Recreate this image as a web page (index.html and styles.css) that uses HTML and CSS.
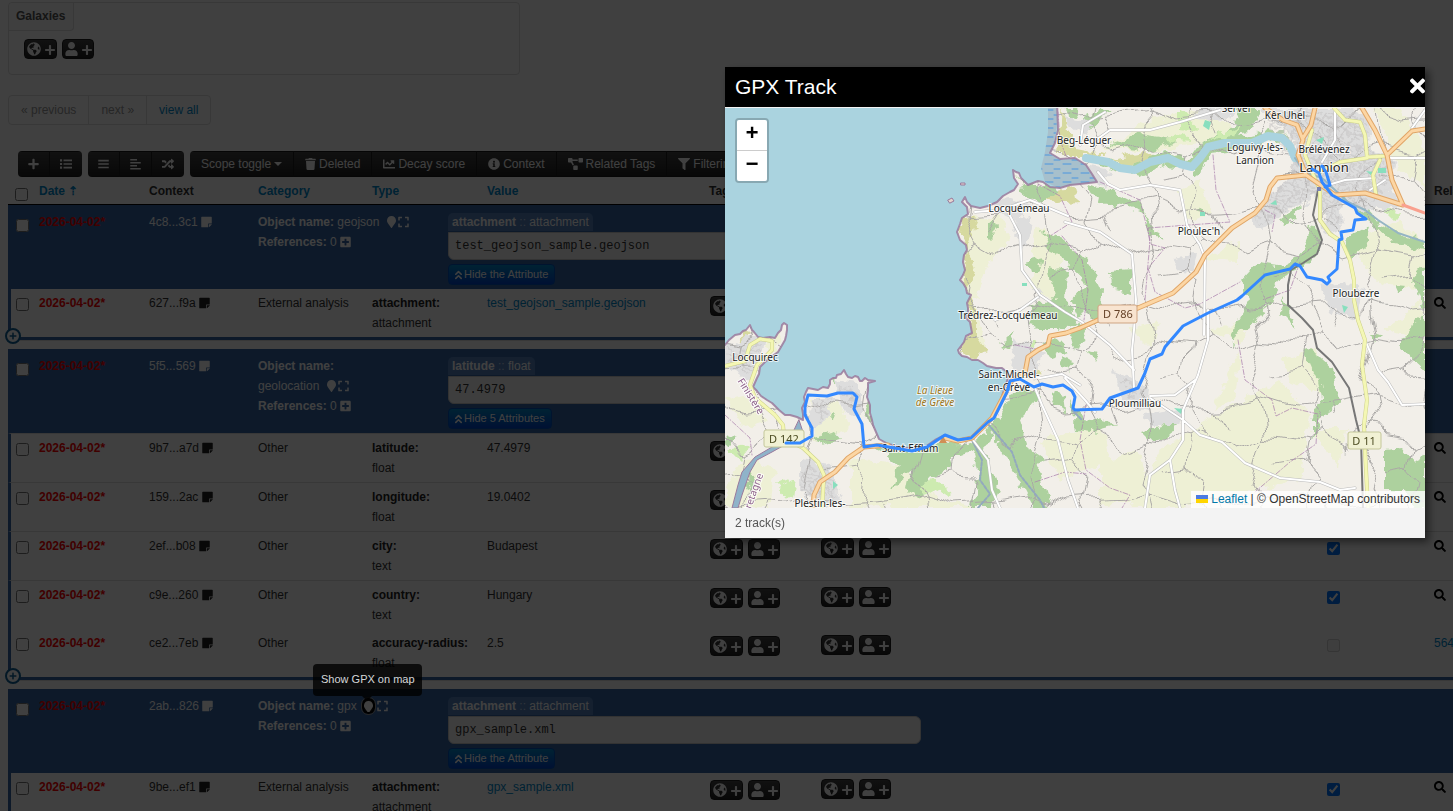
FILE: index.html
```html
<!DOCTYPE html>
<html lang="en">
<head>
<meta charset="utf-8">
<title>Event - GPX Track</title>
<link rel="stylesheet" href="styles.css">
</head>
<body>
<svg class="sprite" aria-hidden="true">
  <symbol id="plus" viewBox="0 0 448 512"><path d="M416 208H272V64c0-17.67-14.33-32-32-32h-32c-17.67 0-32 14.33-32 32v144H32c-17.67 0-32 14.33-32 32v32c0 17.67 14.33 32 32 32h144v144c0 17.67 14.33 32 32 32h32c17.67 0 32-14.33 32-32V304h144c17.67 0 32-14.33 32-32v-32c0-17.67-14.33-32-32-32z"/></symbol>
  <symbol id="user" viewBox="0 0 448 512"><path d="M224 256c70.7 0 128-57.3 128-128S294.7 0 224 0 96 57.3 96 128s57.3 128 128 128zm89.6 32h-16.7c-22.2 10.2-46.9 16-72.9 16s-50.6-5.8-72.9-16h-16.7C60.2 288 0 348.2 0 422.4V464c0 26.5 21.5 48 48 48h352c26.5 0 48-21.5 48-48v-41.6c0-74.2-60.2-134.4-134.4-134.4z"/></symbol>
  <symbol id="globe" viewBox="0 0 496 512"><path d="M248 8C111.03 8 0 119.03 0 256s111.03 248 248 248 248-111.03 248-248S384.97 8 248 8zm82.29 357.6c-3.9 3.88-7.99 7.95-11.31 11.28-2.99 3-5.1 6.7-6.17 10.71-1.51 5.66-2.73 11.38-4.77 16.87l-17.39 46.85c-13.76 3-28 4.69-42.65 4.69v-27.38c1.69-12.62-7.64-36.26-22.63-51.25-6-6-9.37-14.14-9.37-22.63v-32.01c0-11.64-6.27-22.34-16.46-27.97-14.37-7.95-34.81-19.06-48.81-26.11-11.48-5.78-22.1-13.14-31.65-21.75l-.8-.72a114.792 114.792 0 0 1-18.06-20.74c-9.38-13.77-24.66-36.42-34.59-51.14 20.47-45.5 57.36-82.04 103.2-101.89l24.01 12.01C203.48 89.74 216 82.01 216 70.11v-11.3c7.99-1.29 16.12-2.11 24.39-2.42l28.3 28.3c6.25 6.25 6.25 16.38 0 22.63L264 112l-10.34 10.34c-3.12 3.12-3.12 8.19 0 11.31l4.69 4.69c3.12 3.12 3.12 8.19 0 11.31l-8 8a8.008 8.008 0 0 1-5.66 2.34h-8.99c-2.08 0-4.08.81-5.58 2.27l-9.92 9.65a8.008 8.008 0 0 0-1.58 9.31l15.59 31.19c2.66 5.32-1.21 11.58-7.15 11.58h-5.64c-1.93 0-3.79-.7-5.24-1.96l-9.28-8.06a16.017 16.017 0 0 0-15.55-3.1l-31.17 10.39a11.95 11.95 0 0 0-8.17 11.34c0 4.53 2.56 8.66 6.61 10.69l11.08 5.54c9.41 4.71 19.79 7.16 30.31 7.16s22.59 27.29 32 32h66.75c8.49 0 16.62 3.37 22.63 9.37l13.69 13.69a30.503 30.503 0 0 1 8.93 21.57 46.536 46.536 0 0 1-13.72 32.98zM417 274.25c-5.79-1.45-10.84-5-14.15-9.97l-17.98-26.97a23.97 23.97 0 0 1 0-26.62l19.59-29.38c2.32-3.47 5.5-6.29 9.24-8.15l12.98-6.49C440.2 193.59 448 223.87 448 256c0 8.67-.74 17.16-1.82 25.54L417 274.25z"/></symbol>
  <symbol id="search" viewBox="0 0 512 512"><path d="M505 442.7L405.3 343c-4.5-4.5-10.6-7-17-7H372c27.6-35.3 44-79.7 44-128C416 93.1 322.9 0 208 0S0 93.1 0 208s93.1 208 208 208c48.3 0 92.7-16.4 128-44v16.3c0 6.4 2.5 12.5 7 17l99.7 99.7c9.4 9.4 24.6 9.4 33.9 0l28.3-28.3c9.4-9.4 9.4-24.6.1-34zM208 336c-70.7 0-128-57.2-128-128 0-70.7 57.2-128 128-128 70.7 0 128 57.2 128 128 0 70.7-57.2 128-128 128z"/></symbol>
  <symbol id="trash" viewBox="0 0 448 512"><path d="M432 32H312l-9.4-18.7A24 24 0 0 0 281.1 0H166.8a23.72 23.72 0 0 0-21.4 13.3L136 32H16A16 16 0 0 0 0 48v32a16 16 0 0 0 16 16h416a16 16 0 0 0 16-16V48a16 16 0 0 0-16-16zM53.2 467a48 48 0 0 0 47.9 45h245.8a48 48 0 0 0 47.9-45L416 128H32z"/></symbol>
  <symbol id="chart" viewBox="0 0 512 512"><path d="M496 384H64V80c0-8.84-7.16-16-16-16H16C7.16 64 0 71.16 0 80v336c0 17.67 14.33 32 32 32h464c8.84 0 16-7.16 16-16v-32c0-8.84-7.16-16-16-16zM464 96H345.94c-21.38 0-32.09 25.85-16.97 40.97l32.4 32.4L288 242.75l-73.37-73.37c-12.5-12.5-32.76-12.5-45.25 0l-68.69 68.69c-6.25 6.25-6.25 16.38 0 22.63l22.62 22.62c6.25 6.25 16.38 6.25 22.63 0L192 237.25l73.37 73.37c12.5 12.5 32.76 12.5 45.25 0l96-96 32.4 32.4c15.12 15.12 40.97 4.41 40.97-16.97V112c.01-8.84-7.15-16-15.99-16z"/></symbol>
  <symbol id="info" viewBox="0 0 512 512"><path d="M256 8C119.043 8 8 119.083 8 256c0 136.997 111.043 248 248 248s248-111.003 248-248C504 119.083 392.957 8 256 8zm0 110c23.196 0 42 18.804 42 42s-18.804 42-42 42-42-18.804-42-42 18.804-42 42-42zm56 254c0 6.627-5.373 12-12 12h-88c-6.627 0-12-5.373-12-12v-24c0-6.627 5.373-12 12-12h12v-64h-12c-6.627 0-12-5.373-12-12v-24c0-6.627 5.373-12 12-12h64c6.627 0 12 5.373 12 12v100h12c6.627 0 12 5.373 12 12v24z"/></symbol>
  <symbol id="filter" viewBox="0 0 512 512"><path d="M487.976 0H24.028C2.71 0-8.047 25.866 7.058 40.971L192 225.941V432c0 7.831 3.821 15.17 10.237 19.662l80 55.98C298.02 518.69 320 507.493 320 487.98V225.941l184.947-184.97C520.021 25.896 509.338 0 487.976 0z"/></symbol>
  <symbol id="diagram" viewBox="0 0 640 512"><path d="M384 320H256c-17.67 0-32 14.33-32 32v128c0 17.67 14.33 32 32 32h128c17.67 0 32-14.33 32-32V352c0-17.67-14.33-32-32-32zM192 32c0-17.67-14.33-32-32-32H32C14.33 0 0 14.33 0 32v128c0 17.67 14.33 32 32 32h95.72l73.16 128.04C211.98 300.98 232.4 288 256 288h.28L192 175.51V128h224V64H192V32zM608 0H480c-17.67 0-32 14.33-32 32v128c0 17.67 14.33 32 32 32h128c17.67 0 32-14.33 32-32V32c0-17.67-14.33-32-32-32z"/></symbol>
  <symbol id="note" viewBox="0 0 448 512"><path d="M312 320h136V56c0-13.3-10.7-24-24-24H24C10.7 32 0 42.7 0 56v400c0 13.3 10.7 24 24 24h264V344c0-13.2 10.8-24 24-24zm129 55l-98 98c-4.5 4.5-10.6 7-17 7h-6V352h128v6.1c0 6.3-2.5 12.4-7 16.9z"/></symbol>
  <symbol id="plus-square" viewBox="0 0 448 512"><path d="M400 32H48C21.5 32 0 53.5 0 80v352c0 26.5 21.5 48 48 48h352c26.5 0 48-21.5 48-48V80c0-26.5-21.5-48-48-48zm-32 252c0 6.6-5.4 12-12 12h-92v92c0 6.6-5.4 12-12 12h-56c-6.6 0-12-5.4-12-12v-92H92c-6.6 0-12-5.4-12-12v-56c0-6.6 5.4-12 12-12h92v-92c0-6.6 5.4-12 12-12h56c6.6 0 12 5.4 12 12v92h92c6.6 0 12 5.4 12 12v56z"/></symbol>
  <symbol id="expand" viewBox="0 0 448 512"><path d="M0 180V56c0-13.3 10.7-24 24-24h124c6.6 0 12 5.4 12 12v40c0 6.6-5.4 12-12 12H64v84c0 6.6-5.4 12-12 12H12c-6.6 0-12-5.4-12-12zM288 44v40c0 6.6 5.4 12 12 12h84v84c0 6.6 5.4 12 12 12h40c6.6 0 12-5.4 12-12V56c0-13.3-10.7-24-24-24H300c-6.6 0-12 5.4-12 12zm148 276h-40c-6.6 0-12 5.4-12 12v84h-84c-6.6 0-12 5.4-12 12v40c0 6.6 5.4 12 12 12h124c13.3 0 24-10.7 24-24V332c0-6.6-5.4-12-12-12zM160 468v-40c0-6.6-5.4-12-12-12H64v-84c0-6.6-5.4-12-12-12H12c-6.6 0-12 5.4-12 12v124c0 13.3 10.7 24 24 24h124c6.6 0 12-5.4 12-12z"/></symbol>
  <symbol id="marker" viewBox="0 0 384 512"><path d="M172.268 501.67C26.97 291.031 0 269.413 0 192 0 85.961 85.961 0 192 0s192 85.961 192 192c0 77.413-26.97 99.031-172.268 309.67-9.535 13.774-29.93 13.773-39.464 0z"/></symbol>
  <symbol id="times" viewBox="0 0 352 512"><path d="M242.72 256l100.07-100.07c12.28-12.28 12.28-32.19 0-44.48l-22.24-22.24c-12.28-12.28-32.19-12.28-44.48 0L176 189.28 75.93 89.21c-12.28-12.28-32.19-12.28-44.48 0L9.21 111.45c-12.28 12.28-12.28 32.19 0 44.48L109.28 256 9.21 356.07c-12.28 12.28-12.28 32.19 0 44.48l22.24 22.24c12.28 12.28 32.2 12.28 44.48 0L176 322.72l100.07 100.07c12.28 12.28 32.2 12.28 44.48 0l22.24-22.24c12.28-12.28 12.28-32.19 0-44.48L242.72 256z"/></symbol>
  <symbol id="random" viewBox="0 0 512 512"><path d="M504.971 359.029c9.373 9.373 9.373 24.569 0 33.941l-80 79.984c-15.01 15.01-40.971 4.49-40.971-16.971V416h-58.785a12.004 12.004 0 0 1-8.773-3.812l-70.556-75.596 53.333-57.143L352 336h32v-39.981c0-21.438 25.943-31.998 40.971-16.971l80 79.981zM12 176h84l52.781 56.551 53.333-57.143-70.556-75.596A11.999 11.999 0 0 0 122.785 96H12c-6.627 0-12 5.373-12 12v56c0 6.627 5.373 12 12 12zm372 0v39.984c0 21.46 25.961 31.98 40.971 16.971l80-79.984c9.373-9.373 9.373-24.569 0-33.941l-80-79.981C409.943 24.021 384 34.582 384 56.019V96h-58.785a12.004 12.004 0 0 0-8.773 3.812L96 336H12c-6.627 0-12 5.373-12 12v56c0 6.627 5.373 12 12 12h110.785c3.326 0 6.503-1.381 8.773-3.812L352 176h32z"/></symbol>
  <symbol id="list" viewBox="0 0 512 512"><path d="M0 56h90v90H0zM0 211h90v90H0zM0 366h90v90H0zM150 66h362v68H150zM150 221h362v68H150zM150 376h362v68H150z"/></symbol>
  <symbol id="justify" viewBox="0 0 448 512"><path d="M0 76h448v68H0zM0 222h448v68H0zM0 368h448v68H0z"/></symbol>
  <symbol id="align-left" viewBox="0 0 448 512"><path d="M0 40h288v64H0zM0 168h448v64H0zM0 296h288v64H0zM0 424h448v64H0z"/></symbol>
  <symbol id="double-up" viewBox="0 0 320 512"><path d="M34 246 160 120l126 126M34 438l126-126 126 126" fill="none" stroke="currentColor" stroke-width="72" stroke-linejoin="round" stroke-linecap="round"/></symbol>
</svg>

<main class="page">
  <section class="galaxies">
    <h2 class="galaxies-title">Galaxies</h2>
    <div class="adders">
      <button class="adder" aria-label="Add global galaxy"><svg class="i14"><use href="#globe"/></svg><svg class="i12"><use href="#plus"/></svg></button>
      <button class="adder" aria-label="Add local galaxy"><svg class="i14 n13"><use href="#user"/></svg><svg class="i12"><use href="#plus"/></svg></button>
    </div>
  </section>

  <nav class="pagination">
    <a class="muted" href="#">« previous</a>
    <a class="muted" href="#">next »</a>
    <a href="#">view all</a>
  </nav>

  <div class="toolbar">
    <div class="group">
      <button class="tool" aria-label="Add attribute"><svg class="ico"><use href="#plus"/></svg></button>
      <button class="tool" aria-label="List"><svg class="ico w12"><use href="#list"/></svg></button>
    </div>
    <div class="group">
      <button class="tool" aria-label="Flat"><svg class="ico"><use href="#justify"/></svg></button>
      <button class="tool" aria-label="Tree"><svg class="ico"><use href="#align-left"/></svg></button>
      <button class="tool" aria-label="Shuffle"><svg class="ico w12"><use href="#random"/></svg></button>
    </div>
    <div class="group wide">
      <button class="tool">Scope toggle<span class="caret"></span></button>
      <button class="tool"><svg class="ico"><use href="#trash"/></svg>Deleted</button>
      <button class="tool"><svg class="ico w12"><use href="#chart"/></svg>Decay score</button>
      <button class="tool"><svg class="ico w12"><use href="#info"/></svg>Context</button>
      <button class="tool"><svg class="ico w15"><use href="#diagram"/></svg>Related Tags</button>
      <button class="tool"><svg class="ico w12"><use href="#filter"/></svg>Filtering tool</button>
    </div>
  </div>

  <table class="attributes">
    <colgroup><col class="c-check"><col class="c-date"><col class="c-context"><col class="c-category"><col class="c-type"><col class="c-value"><col class="c-tags"><col class="c-tags"><col><col class="c-corr"><col class="c-related"></colgroup>
    <thead>
      <tr>
        <th><input type="checkbox" aria-label="Select all"></th>
        <th><a href="#">Date ⇡</a></th><th>Context</th><th><a href="#">Category</a></th><th><a href="#">Type</a></th><th><a href="#">Value</a></th><th>Tags</th><th>Galaxies</th><th>Comment</th><th></th><th>Related Events</th>
      </tr>
    </thead>
    <tbody>
      <tr class="object">
        <td><input type="checkbox" aria-label="Select object 4c8"></td><td class="date">2026-04-02*</td>
        <td>4c8...3c1 <svg class="ico"><use href="#note"/></svg></td>
        <td colspan="8"><div class="object-body">
          <div class="object-name"><b>Object name:</b> geojson <a href="#" class="act first" aria-label="Show on map"><svg class="ico w9"><use href="#marker"/></svg></a><a href="#" class="act" aria-label="Expand"><svg class="ico"><use href="#expand"/></svg></a><br><b>References:</b> 0 <svg class="ico"><use href="#plus-square"/></svg></div>
          <div class="preview"><div class="preview-tab"><b>attachment</b> <i>::</i> attachment</div><pre class="preview-value">test_geojson_sample.geojson</pre><button class="toggle"><svg class="i11"><use href="#double-up"/></svg>Hide the Attribute</button></div>
        </div></td>
      </tr>
      <tr class="last">
        <td><input type="checkbox" aria-label="Select 627"></td><td class="date">2026-04-02*</td>
        <td>627...f9a <svg class="ico dark"><use href="#note"/></svg></td>
        <td>External analysis</td><td><b>attachment:</b><br>attachment</td><td><a href="#">test_geojson_sample.geojson</a></td>
        <td><div class="adders tags"><button class="adder" aria-label="Add tag"><svg class="i14"><use href="#globe"/></svg><svg class="i12"><use href="#plus"/></svg></button><button class="adder" aria-label="Add local tag"><svg class="i14 n13"><use href="#user"/></svg><svg class="i12"><use href="#plus"/></svg></button></div></td>
        <td></td><td></td><td></td><td><a class="look" href="#" aria-label="Search"><svg class="ico w12"><use href="#search"/></svg></a></td>
      </tr>
      <tr class="gap"><td colspan="11"><button class="add-row" aria-label="Add attribute to object"><svg class="i8"><use href="#plus"/></svg></button></td></tr>

      <tr class="object">
        <td><input type="checkbox" aria-label="Select object 5f5"></td><td class="date">2026-04-02*</td>
        <td>5f5...569 <svg class="ico"><use href="#note"/></svg></td>
        <td colspan="8"><div class="object-body">
          <div class="object-name"><b>Object name:</b><br>geolocation <a href="#" class="act first" aria-label="Show on map"><svg class="ico w9"><use href="#marker"/></svg></a><a href="#" class="act" aria-label="Expand"><svg class="ico"><use href="#expand"/></svg></a><br><b>References:</b> 0 <svg class="ico"><use href="#plus-square"/></svg></div>
          <div class="preview"><div class="preview-tab"><b>latitude</b> <i>::</i> float</div><pre class="preview-value">47.4979</pre><button class="toggle"><svg class="i11"><use href="#double-up"/></svg>Hide 5 Attributes</button></div>
        </div></td>
      </tr>
      <tr>
        <td><input type="checkbox" aria-label="Select 9b7"></td><td class="date">2026-04-02*</td>
        <td>9b7...a7d <svg class="ico dark"><use href="#note"/></svg></td>
        <td>Other</td><td><b>latitude:</b><br>float</td><td>47.4979</td>
        <td><div class="adders tags"><button class="adder" aria-label="Add tag"><svg class="i14"><use href="#globe"/></svg><svg class="i12"><use href="#plus"/></svg></button></div></td>
        <td></td><td></td><td></td><td><a class="look" href="#" aria-label="Search"><svg class="ico w12"><use href="#search"/></svg></a></td>
      </tr>
      <tr>
        <td><input type="checkbox" aria-label="Select 159"></td><td class="date">2026-04-02*</td>
        <td>159...2ac <svg class="ico dark"><use href="#note"/></svg></td>
        <td>Other</td><td><b>longitude:</b><br>float</td><td>19.0402</td>
        <td><div class="adders tags"><button class="adder" aria-label="Add tag"><svg class="i14"><use href="#globe"/></svg><svg class="i12"><use href="#plus"/></svg></button></div></td>
        <td></td><td></td><td></td><td><a class="look" href="#" aria-label="Search"><svg class="ico w12"><use href="#search"/></svg></a></td>
      </tr>
      <tr>
        <td><input type="checkbox" aria-label="Select 2ef"></td><td class="date">2026-04-02*</td>
        <td>2ef...b08 <svg class="ico dark"><use href="#note"/></svg></td>
        <td>Other</td><td><b>city:</b><br>text</td><td>Budapest</td>
        <td><div class="adders tags"><button class="adder" aria-label="Add tag"><svg class="i14"><use href="#globe"/></svg><svg class="i12"><use href="#plus"/></svg></button><button class="adder" aria-label="Add local tag"><svg class="i14 n13"><use href="#user"/></svg><svg class="i12"><use href="#plus"/></svg></button></div></td>
        <td><div class="adders"><button class="adder" aria-label="Add galaxy"><svg class="i14"><use href="#globe"/></svg><svg class="i12"><use href="#plus"/></svg></button><button class="adder" aria-label="Add local galaxy"><svg class="i14 n13"><use href="#user"/></svg><svg class="i12"><use href="#plus"/></svg></button></div></td>
        <td></td><td class="corr"><input type="checkbox" checked aria-label="Correlate"></td><td><a class="look" href="#" aria-label="Search"><svg class="ico w12"><use href="#search"/></svg></a></td>
      </tr>
      <tr>
        <td><input type="checkbox" aria-label="Select c9e"></td><td class="date">2026-04-02*</td>
        <td>c9e...260 <svg class="ico dark"><use href="#note"/></svg></td>
        <td>Other</td><td><b>country:</b><br>text</td><td>Hungary</td>
        <td><div class="adders tags"><button class="adder" aria-label="Add tag"><svg class="i14"><use href="#globe"/></svg><svg class="i12"><use href="#plus"/></svg></button><button class="adder" aria-label="Add local tag"><svg class="i14 n13"><use href="#user"/></svg><svg class="i12"><use href="#plus"/></svg></button></div></td>
        <td><div class="adders"><button class="adder" aria-label="Add galaxy"><svg class="i14"><use href="#globe"/></svg><svg class="i12"><use href="#plus"/></svg></button><button class="adder" aria-label="Add local galaxy"><svg class="i14 n13"><use href="#user"/></svg><svg class="i12"><use href="#plus"/></svg></button></div></td>
        <td></td><td class="corr"><input type="checkbox" checked aria-label="Correlate"></td><td><a class="look" href="#" aria-label="Search"><svg class="ico w12"><use href="#search"/></svg></a></td>
      </tr>
      <tr class="last">
        <td><input type="checkbox" aria-label="Select ce2"></td><td class="date">2026-04-02*</td>
        <td>ce2...7eb <svg class="ico dark"><use href="#note"/></svg></td>
        <td>Other</td><td><b>accuracy-radius:</b><br>float</td><td>2.5</td>
        <td><div class="adders tags"><button class="adder" aria-label="Add tag"><svg class="i14"><use href="#globe"/></svg><svg class="i12"><use href="#plus"/></svg></button><button class="adder" aria-label="Add local tag"><svg class="i14 n13"><use href="#user"/></svg><svg class="i12"><use href="#plus"/></svg></button></div></td>
        <td><div class="adders"><button class="adder" aria-label="Add galaxy"><svg class="i14"><use href="#globe"/></svg><svg class="i12"><use href="#plus"/></svg></button><button class="adder" aria-label="Add local galaxy"><svg class="i14 n13"><use href="#user"/></svg><svg class="i12"><use href="#plus"/></svg></button></div></td>
        <td></td><td class="corr"><input type="checkbox" disabled aria-label="Correlate"></td><td><a href="#">564</a></td>
      </tr>
      <tr class="gap"><td colspan="11"><button class="add-row" aria-label="Add attribute to object"><svg class="i8"><use href="#plus"/></svg></button></td></tr>

      <tr class="object">
        <td><input type="checkbox" aria-label="Select object 2ab"></td><td class="date">2026-04-02*</td>
        <td>2ab...826 <svg class="ico"><use href="#note"/></svg></td>
        <td colspan="8"><div class="object-body">
          <div class="object-name"><b>Object name:</b> gpx <a href="#" class="act first focused" aria-label="Show GPX on map"><svg class="ico w9"><use href="#marker"/></svg></a><a href="#" class="act" aria-label="Expand"><svg class="ico"><use href="#expand"/></svg></a><br><b>References:</b> 0 <svg class="ico"><use href="#plus-square"/></svg></div>
          <div class="preview"><div class="preview-tab"><b>attachment</b> <i>::</i> attachment</div><pre class="preview-value">gpx_sample.xml</pre><button class="toggle"><svg class="i11"><use href="#double-up"/></svg>Hide the Attribute</button></div>
        </div></td>
      </tr>
      <tr class="last">
        <td><input type="checkbox" aria-label="Select 9be"></td><td class="date">2026-04-02*</td>
        <td>9be...ef1 <svg class="ico dark"><use href="#note"/></svg></td>
        <td>External analysis</td><td><b>attachment:</b><br>attachment</td><td><a href="#">gpx_sample.xml</a></td>
        <td><div class="adders tags"><button class="adder" aria-label="Add tag"><svg class="i14"><use href="#globe"/></svg><svg class="i12"><use href="#plus"/></svg></button><button class="adder" aria-label="Add local tag"><svg class="i14 n13"><use href="#user"/></svg><svg class="i12"><use href="#plus"/></svg></button></div></td>
        <td><div class="adders"><button class="adder" aria-label="Add galaxy"><svg class="i14"><use href="#globe"/></svg><svg class="i12"><use href="#plus"/></svg></button><button class="adder" aria-label="Add local galaxy"><svg class="i14 n13"><use href="#user"/></svg><svg class="i12"><use href="#plus"/></svg></button></div></td>
        <td></td><td class="corr"><input type="checkbox" checked aria-label="Correlate"></td><td><a class="look" href="#" aria-label="Search"><svg class="ico w12"><use href="#search"/></svg></a></td>
      </tr>
    </tbody>
  </table>
</main>

<div class="overlay"></div>
<div class="tooltip" role="tooltip">Show GPX on map</div>

<section class="modal" role="dialog" aria-labelledby="modal-title">
  <header class="modal-head"><h1 id="modal-title">GPX Track</h1><button class="close" aria-label="Close"><svg><use href="#times"/></svg></button></header>
  <div class="map">
    <svg class="map-canvas" viewBox="725 108 700 400" preserveAspectRatio="xMidYMid slice">
      <defs>
        <path id="land" d="M715 350 725 345 729 340 735 335 740 334 743 331 746 330 750 325 752 330 754 332 758 337 763 338 770 337 775 338 778 333 781 330 782 325 784 323 787 325 787 330 786 336 785 340 781 347 778 352 771 357 765 362 760 367 759 374 757 378 753 387 757 391 761 396 767 400 772 403 779 410 785 415 790 415 797 417 803 420 803 414 802 408 805 402 804 397 806 392 808 388 813 389 818 390 823 387 828 388 830 384 830 380 833 378 836 378 837 375 841 374 844 370 846 374 848 377 852 378 855 376 858 377 860 381 862 381 865 378 868 380 875 381 868 383 868 390 867 397 870 405 870 413 872 420 873 425 876 432 879 439 888 444 905 448 925 447 935 440 945 435 957 440 972 437 992 417 1000 402 1008 378 1007 372 1002 368 996 368 987 366 983 363 978 360 972 360 967 357 962 356 959 353 958 350 961 346 964 342 966 336 972 333 970 322 966 318 968 313 968 308 967 303 971 295 967 293 966 288 963 283 960 280 963 275 965 270 963 262 964 255 967 250 966 245 960 240 957 232 960 224 962 218 968 214 967 207 962 202 965 197 967 202 971 206 980 208 988 206 997 202 1003 196 1010 192 1014 190 1018 184 1014 178 1013 170 1016 172 1019 173 1021 178 1028 185 1038 181 1043 182 1050 187 1060 188 1070 185 1080 184 1097 182 1092 174 1086 165 1075 158 1060 159 1050 153 1055 143 1058 130 1057 100H1435V520H715Z"/>
        <clipPath id="on-land"><use href="#land"/></clipPath>
        <filter id="rough" x="-5%" y="-5%" width="110%" height="110%"><feTurbulence type="fractalNoise" baseFrequency=".09" numOctaves="3" seed="4"/><feDisplacementMap in="SourceGraphic" scale="13" xChannelSelector="R" yChannelSelector="G"/></filter>
        <filter id="bend" x="-5%" y="-5%" width="110%" height="110%"><feTurbulence type="fractalNoise" baseFrequency=".018" numOctaves="2" seed="9"/><feDisplacementMap in="SourceGraphic" scale="44" xChannelSelector="R" yChannelSelector="G"/></filter>
        <pattern id="lanes" width="112" height="96" patternUnits="userSpaceOnUse"><path d="M0 20 28 14 60 24 112 20M28 14 34 52 22 96M22 0 28 14M34 52 70 58 88 48 112 62M0 62 34 52M70 58 66 80 80 96M80 0 76 26 88 48M66 80 40 84M96 22 102 38"/></pattern>
        <pattern id="streets" width="11" height="10" patternUnits="userSpaceOnUse" patternTransform="rotate(24)"><path d="M0 2H11M4 0V10M4 7H11"/></pattern>
        <pattern id="flats" width="18" height="9" patternUnits="userSpaceOnUse"><path d="M1 2h8M10 7h6"/></pattern>
      </defs>
      <rect class="sea" x="725" y="108" width="700" height="400"/>
      <path class="flat" d="M1048 108h10l-3 36-6 10 14 6 20-2 14 24-16 3-22 3-14-6-4-14 4-16 3-20z"/><path fill="url(#flats)" d="M1048 108h10l-3 36-6 10 14 6 20-2 14 24-16 3-22 3-14-6-4-14 4-16 3-20z"/>
      <use href="#land" class="land"/>
      <g clip-path="url(#on-land)">
        <g class="field" filter="url(#rough)">
          <path d="M966 220 1000 215 1010 240 990 262 975 300 985 345 968 350 962 280ZM1035 225 1060 240 1055 300 1032 290ZM1100 150 1150 120 1200 110 1240 130 1220 140 1160 150ZM1175 190 1200 180 1212 215 1190 220ZM1345 240 1400 220 1425 250 1425 290 1380 285ZM1230 365 1240 350 1235 400 1215 410ZM1280 360 1315 350 1330 400 1290 380ZM1200 425 1280 380 1310 415 1300 480 1180 508H1130L1160 450ZM1100 460 1140 450 1150 500 1100 508ZM1040 440 1100 425 1110 460 1060 480ZM850 460 900 465 930 500 850 508ZM725 490 745 455 775 470 770 508H725ZM890 480 940 500 980 508H890ZM810 400 840 400 850 430 815 440ZM765 345 782 330 775 355ZM1130 330 1160 320 1150 350ZM1375 108H1400L1425 150V190L1400 170ZM1210 330 1250 320 1240 345ZM1385 330 1420 300 1425 340ZM1310 430 1345 430 1340 470ZM1200 260 1240 240 1240 262ZM725 400 745 395 770 420 745 430Z"/>
        </g>
        <g class="heath" filter="url(#rough)"><path d="M962 216 978 222 966 250 975 272 966 290 976 300 976 335 988 352 975 358 958 352 972 330 964 280 966 245 957 230ZM1040 192 1075 188 1078 202 1055 204ZM1062 112 1078 150 1110 156 1058 156ZM1112 158 1150 152 1160 160 1130 166ZM745 328 755 332 735 345ZM1035 365 1045 372 1030 374Z"/></g>
        <g class="wood" filter="url(#rough)">
          <path d="M1015 172 1022 186 1050 186 1060 190 1040 205 1022 190ZM1042 232 1065 240 1090 265 1102 290 1100 325 1090 315 1085 280 1066 262 1052 252ZM1050 268 1068 272 1066 300 1078 325 1052 330 1030 325 1036 305 1055 300ZM1110 270 1132 268 1130 292 1112 288ZM988 225 996 218 998 230 988 240ZM1025 262 1042 258 1038 272 1028 272ZM1085 185 1110 190 1140 205 1160 240 1150 236 1145 215 1120 205 1095 200ZM1065 240 1088 262 1095 310 1078 318 1070 300 1086 285Z"/>
          <path d="M1090 158 1110 158 1130 167 1165 150 1190 160 1205 138 1225 132 1245 110 1255 120 1240 138 1270 130 1285 134 1298 150 1290 148 1270 138 1250 148 1212 152 1196 178 1190 168 1165 166 1140 176 1118 172ZM1080 120 1100 108 1112 112 1090 128ZM1105 146 1140 134 1180 140 1150 150ZM1235 108 1260 108 1252 130 1242 128ZM1300 166 1322 176 1365 208 1382 226 1400 235 1425 242V250L1395 244 1372 222 1340 198Z"/>
          <path d="M1240 282 1258 262 1284 266 1298 258 1310 228 1318 222 1320 250 1302 268 1285 275 1270 300 1258 320 1240 332 1234 345 1230 335 1250 300ZM1280 220 1300 206 1296 218 1284 225ZM1345 238 1368 226 1372 240 1352 258ZM1284 300 1290 310 1300 330 1292 322 1280 310ZM1304 348 1320 358 1335 372 1340 400 1330 412 1318 420 1312 440 1312 420 1322 400 1318 380ZM1400 345 1414 322 1425 318V372L1412 360ZM1370 332 1382 336 1375 342ZM1385 450 1402 448 1412 460 1425 455V508H1415L1405 490 1385 490ZM1412 280 1425 265V310Z"/>
          <path d="M875 445 915 450 940 442 968 444 980 438 1000 418 1012 395 1024 388 1040 396 1030 410 1020 420 1030 450 1045 460 1038 470 1050 508H1032L1018 480 1002 450 992 432 985 450 990 470 998 488 990 508H970L980 480 972 450 955 456 945 470 930 478 918 500 908 490 912 470 900 480 890 490 900 465ZM1050 392 1064 396 1066 412 1056 404ZM1026 180 1034 184 1026 190ZM870 400 874 430 866 410ZM815 437 835 432 842 440 820 444ZM828 415 834 412 832 420ZM826 376 835 374 836 388ZM1030 302 1050 308 1062 330 1040 330 1030 320ZM1042 345 1055 338 1068 352 1050 358ZM1070 330 1080 325 1088 340 1075 348ZM1088 350 1098 352 1094 360ZM1060 358 1075 362 1068 370ZM1072 400 1082 418 1100 420 1118 425 1090 432 1075 430ZM1140 432 1180 420 1170 436 1150 442ZM725 432 740 438 728 445ZM1065 108 1080 108 1072 120ZM1200 205 1206 215 1198 212ZM745 485 755 470 750 495ZM1000 345 1015 330 1012 348ZM1396 285 1406 286 1400 294Z"/>
        </g>
        <g class="grass" filter="url(#rough)"><path d="M918 488 935 478 950 490 930 496ZM1180 108 1200 130 1180 128ZM1280 118 1300 112 1295 122ZM1168 140 1185 132 1190 142ZM1380 205 1400 212 1395 220ZM1030 340 1038 342 1032 350ZM778 485 795 478 792 500ZM1365 180 1372 176 1372 186ZM1205 140 1240 125 1235 138ZM730 450 750 445 740 460Z"/></g>
        <g class="town" filter="url(#rough)"><path d="M1260 108H1350L1368 118 1370 150 1395 160 1390 190 1405 205 1365 212 1340 195 1345 230 1325 235 1320 195 1290 210 1262 230 1248 220 1270 195 1290 178 1297 140ZM1200 108H1235L1232 120 1190 118ZM725 350 745 335 765 340 760 365 750 380 728 372ZM800 460 830 465 842 500 820 508 800 490ZM1112 370 1150 388 1148 410 1125 405ZM1145 415 1185 408 1180 425 1150 425ZM812 398 835 398 822 425 808 430ZM835 382 860 385 860 420 845 412ZM1015 340 1045 350 1035 378 1010 375ZM1020 215 1032 220 1026 250 1015 235ZM1335 285 1365 288 1358 320 1338 312ZM1170 258 1195 255 1190 272 1178 270ZM1320 285 1345 280 1350 305 1330 312ZM985 200 1010 198 1030 205 1018 220 998 210ZM1062 118 1095 122 1085 135ZM1030 290 1045 292 1040 302ZM1085 165 1110 170 1105 188 1090 178Z"/></g>
        <rect class="lanes" x="690" y="70" width="780" height="480" fill="url(#lanes)" filter="url(#bend)"/>
        <path class="streets" fill="url(#streets)" filter="url(#rough)" d="M1262 112H1350L1366 122 1368 150 1392 160 1388 190 1365 208 1340 192 1342 225 1326 225 1318 195 1290 208 1262 225 1252 218 1270 195 1295 172ZM728 350 765 342 755 375 735 370ZM802 465 828 468 840 500 802 495ZM1118 375 1146 392 1130 400ZM812 400 832 400 820 425ZM838 388 858 390 856 412Z"/>
        <path class="park" d="M1205 120l6 2-2 8-6-4zM1316 140l8-3-2 7zM1366 171l8 1-1 5zM1270 204l6-4 1 5zM1200 212h5v4h-5zM1174 408l9 1-2 5zM833 481l5 4-5 4zM1342 305l6 2-4 6zM1022 283h5v3h-5zM1378 168h8v5h-8z"/>
      </g>
      <path class="channel" d="M799 420 803 432 790 442 772 452 757 460 750 472 742 495 738 508H732L738 485 742 472 755 457 772 447 790 438Z"/>
      <use href="#land" class="coast"/>
      <path class="islet" d="M961 183h4v2h-4zM948 200l4-2 2 3-4 2z"/>
      <path class="river wide" d="M1086 158 1108 162 1120 168 1135 170 1150 162 1168 158 1180 164 1192 167 1200 158 1208 147 1225 143 1252 143 1268 136 1282 138 1290 146 1295 158"/>
      <path class="river" d="M1295 158 1304 172 1322 178 1348 202 1365 210 1378 220 1398 233 1425 242"/>
      <path class="stream" d="M988 424 1012 452 1020 475 1040 500 1044 508M972 440 982 460 980 480 990 494 978 508M1072 410 1082 420"/>
      <path class="border-line" d="M1038 184 1060 196 1072 222 1050 236M1062 236 1082 260 1088 290 1084 320M1213 155 1216 190 1230 222 1148 228 1150 244 1165 248 1148 268 1155 292 1185 308 1200 304 1240 282M1238 340 1245 380 1272 400 1276 416 1292 408 1318 414 1316 444 1290 462 1255 492M1086 405 1080 440 1086 470 1110 488 1130 495 1122 508M725 415 750 438 752 455M1035 482 1065 472 1086 474M1015 345 1040 350M1145 300 1150 240M1300 262 1290 290 1262 300M1265 210 1275 215 1272 232M1058 112 1060 140 1066 156M1100 182 1140 200 1150 240"/>
      <g class="rail"><path d="M1318 190 1313 215 1322 240 1317 254 1303 263 1291 270 1288 285 1288 305 1302 318 1313 330 1317 348 1332 362 1349 388 1356 420 1361 440 1363 508"/></g>
      <g class="case white"><path id="w" d="M1098 172 1108 184 1120 190 1150 185 1180 190 1187 225 1200 245 1205 258 1204 335M1065 222 1100 232 1132 254 1136 300 1134 330 1132 350 1134 388M1008 212 1020 235 1022 270 1040 295 1065 312 1082 322 1110 345 1134 370M1038 297 1020 310 995 320M1065 378 1085 400 1095 412M973 440 988 460 992 490 1000 508M1035 388 1042 405 1058 440 1068 480 1078 508M1208 310 1208 340 1198 375 1183 410 1183 440 1170 460 1150 475 1145 508M1170 460 1175 490 1180 508M1150 398 1183 420 1200 435 1222 442 1245 463 1280 478 1320 482 1340 490 1355 488M1150 396 1175 395 1195 380M1365 340 1378 370 1388 382 1402 405 1425 404M1080 145 1083 125 1105 112M1096 140 1110 130 1150 130 1180 122 1220 110M1425 158 1390 158M1425 110 1412 128M1328 185 1345 180 1375 178M1335 112 1335 140 1322 162M975 212 1000 210 1030 200 1068 216M1015 375 1040 378 1062 374 1080 385M1370 190 1385 180"/></g>
      <use href="#w" class="fill white"/>
      <g class="case yellow"><path id="y" d="M1334 108 1345 120 1360 122 1365 135 1367 157 1387 156M1367 158 1340 162 1320 172M1380 160 1373 175 1376 195M1312 130 1305 155 1312 172 1320 190 1320 220 1330 234 1342 242 1350 260 1354 280 1354 300 1358 320 1365 340 1362 365 1367 400 1364 425 1365 450 1368 508M725 366 745 361 750 345 760 339 772 341 772 350 757 365 750 385 755 398 775 415 783 425 784 438 803 448 818 462 824 475 822 508"/></g>
      <use href="#y" class="fill yellow"/>
      <g class="case orange"><path id="o" d="M992 418 1007 390 1012 380 1025 373 1028 357 1038 350 1048 345 1050 336 1066 333 1080 328 1098 320 1138 308 1173 293 1196 272 1205 255 1232 228 1255 213 1266 200 1270 187 1277 178 1306 175M945 438 958 441 972 438 992 418M888 445 864 447 848 458 835 472 820 482 814 495 813 508M1265 108 1283 120 1297 125 1303 140 1298 155 1306 175 1325 188 1335 195 1365 193 1403 205M1315 108 1311 125 1303 138M1362 108 1375 130 1387 155 1392 180 1403 205M1425 129 1412 131 1387 155"/></g>
      <use href="#o" class="fill orange"/>
      <path class="trunk" d="M1403 205 1425 213"/>
      <g class="labels">
        <text x="1236" y="112">Servel</text><text x="1285" y="119">Kêr Uhel</text><text x="1084" y="144">Beg-Léguer</text>
        <text x="1255" y="151">Loguivy-lès-</text><text x="1255" y="164">Lannion</text><text x="1324" y="153">Brélévenez</text><text class="city" x="1324" y="172">Lannion</text>
        <text x="1019" y="212">Locquémeau</text><text x="1199" y="235">Ploulec'h</text><text x="1356" y="297">Ploubezre</text>
        <text x="1008" y="319">Trédrez-Locquémeau</text><text x="755" y="361">Locquirec</text><text x="1009" y="378">Saint-Michel-</text><text x="1009" y="391">en-Grève</text>
        <text x="1135" y="407">Ploumilliau</text><text x="910" y="452">Saint-Efflam</text><text x="820" y="507">Plestin-les-</text>
        <text class="bay" x="935" y="394">La Lieue</text><text class="bay" x="935" y="406">de Grève</text>
        <text class="dept" transform="translate(748 398) rotate(58)">Finistère</text><text class="dept" transform="translate(756 495) rotate(-70)">Bretagne</text>
      </g>
      <g class="shield"><rect class="primary" x="1098" y="305" width="39" height="18" rx="2"/><text class="brown" x="1118" y="318">D 786</text><rect x="764" y="430" width="40" height="17" rx="2"/><text x="784" y="443">D 142</text><rect x="1348" y="432" width="33" height="17" rx="2"/><text x="1364" y="445">D 11</text></g>
      <path class="peak" d="m939 443 4-7 4 7z"/><path class="station" d="M1317 187h4v4h-4z"/>
      <path class="track" d="M786 443 800 443 812 436 812 428 805 415 805 407 808 395 827 396 838 393 853 393 857 397 854 409 862 424 864 447 877 445 912 451 927 447 945 435 958 440 971 438 988 422 994 418 1007 392 1010 381 1020 379 1034 387 1042 384 1053 387 1063 385 1072 391 1075 397 1073 408 1075 410 1102 409 1110 398 1138 388 1145 373 1150 359 1162 354 1165 347 1183 326 1208 313 1237 300 1242 296 1265 275 1290 269 1295 264 1300 266 1307 277 1322 280 1327 284 1330 281 1328 277 1337 269 1339 240 1342 239 1341 232 1353 230 1355 220 1366 219 1357 213 1355 208 1332 195 1322 182 1319 173 1312 169M1325 187 1330 185 1326 172 1322 166"/>
    </svg>
    <div class="zoomer"><button aria-label="Zoom in">+</button><button aria-label="Zoom out">−</button></div>
    <div class="credit"><svg class="flag" viewBox="0 0 12 8"><path fill="#4c7be1" d="M0 0h12v4H0z"/><path fill="#ffd500" d="M0 4h12v4H0z"/></svg> <a href="#">Leaflet</a> | © OpenStreetMap contributors</div>
  </div>
  <footer class="modal-foot">2 track(s)</footer>
</section>
</body>
</html>
```

FILE: styles.css
```css
* { box-sizing: border-box; }
html, body { height: 100%; overflow: hidden; }
body { margin: 0; background: #fff; color: #333; font: 12px/20px "Liberation Sans", Arial, sans-serif; }
a { color: #0088cc; text-decoration: none; }
button { font: inherit; color: inherit; cursor: pointer; }
svg { fill: currentColor; }
.sprite { position: absolute; width: 0; height: 0; }
.page { padding: 2px 0 0 8px; overflow: hidden; }

.ico { width: 11px; height: 12px; vertical-align: -2px; }
.ico.w9 { width: 9px; }
.ico.w12 { width: 12px; }
.ico.w15 { width: 15px; }
.dark { color: #222; }
.i14 { width: 14px; height: 14px; }
.i14.n13 { width: 13px; }
.i12 { width: 10px; height: 12px; }
.i11 { width: 7px; height: 11px; }
.i8 { width: 8px; height: 8px; }

.galaxies { max-width: 512px; height: 73px; border: 1px solid #ddd; border-radius: 4px; }
.galaxies-title { display: inline-block; margin: 0; padding: 3px 8px 4px 7px; font-size: 12px; line-height: 20px; color: #555; border: solid #ddd; border-width: 0 1px 1px 0; border-radius: 4px 0 4px 0; background: #fbfbfb; }
.galaxies .adders { padding: 8px 15px 0; }
.adders { display: flex; gap: 5px; padding-top: 2px; }
.adders.tags { padding-top: 3px; padding-left: 1px; }
.attributes .adders { padding-left: 1px; }
.adder { display: flex; align-items: center; gap: 4px; height: 20px; padding: 0 1px 1px 2px; border: 1px solid #1c1c1c; border-radius: 4px; color: #fff; background: linear-gradient(#444, #222); }
.adder .i12 { margin-top: 2px; }

.pagination { display: flex; width: fit-content; margin-top: 20px; border: 1px solid #ddd; border-radius: 4px; }
.pagination a { padding: 4px 12px; }
.pagination a + a { border-left: 1px solid #ddd; }
.pagination .muted { color: #999; }

.toolbar { display: flex; gap: 6px; margin-top: 26px; padding-left: 10px; }
.group { display: flex; border-radius: 4px; overflow: hidden; }
.tool { display: flex; align-items: center; gap: 3px; height: 26px; padding: 0 10px; border: solid #1a1a1a; border-width: 1px 0; color: #fff; background: linear-gradient(#444, #222); white-space: nowrap; }
.tool + .tool { border-left: 1px solid #1f1f1f; }
.wide .tool { padding: 0 11px; }
.caret { border: 4px solid transparent; border-top-color: #fff; border-bottom: 0; }

.attributes { width: calc(100% + 176px); table-layout: fixed; border-collapse: separate; border-spacing: 0; }
.c-check { width: 26px; }
.c-date { width: 110px; }
.c-context { width: 109px; }
.c-category { width: 114px; }
.c-type { width: 115px; }
.c-value { width: 222px; }
.c-tags { width: 111px; }
.c-corr { width: 107px; }
.c-related { width: 200px; }
th { padding: 4px 5px 3px; text-align: left; border-bottom: 1px solid #000; white-space: nowrap; }
td { padding: 4px 5px; vertical-align: top; border-top: 1px solid #ddd; }
th, b { font-weight: bold; }
input[type="checkbox"] { display: block; width: 13px; height: 13px; margin: 5px 0 0; }
th input[type="checkbox"] { margin: 6px 0 0 2px; }
.corr input[type="checkbox"] { margin-top: 6px; }
tr > td:first-child { border-left: 3px solid #3465a4; }
.last td { border-top: 0; }
td b { color: #222; }
.date { color: #f00; font-weight: bold; }
.look { color: #000; }

.object td { padding: 7px 5px 4px; border-top: 0; background: #3465a4; color: #fff; }
.object td.date { color: #f00; }
.object b { color: #fff; }
.object input[type="checkbox"] { margin-top: 7px; }
.object-body { display: flex; }
.object-name { flex: 0 0 190px; }
.act { display: inline-block; color: #fff; line-height: 14px; }
.act.first { margin: 0 2px 0 4px; }
.act.focused { margin: 0 4px 0 4px; border-radius: 4px; outline: 1px solid #999; outline-offset: 2px; box-shadow: 0 0 0 2px #000; background: #111; overflow: hidden; vertical-align: -2px; height: 12px; line-height: 12px; }
.focused .ico { display: block; height: 14px; }
.preview { flex: 0 0 473px; padding-top: 1px; }
.preview-tab { width: fit-content; height: 18px; padding: 0 4px; line-height: 18px; border-radius: 5px 5px 0 0; background: #5380bd; }
.preview-tab i { font-style: normal; opacity: .6; }
.preview-value { height: 28px; margin: 1px 0 4px; padding: 0 6px; font: 12px/26px "Liberation Mono", monospace; color: #333; background: #f8f8f8; border: 1px solid #ccc; border-radius: 0 6px 6px 6px; }
.toggle { display: flex; align-items: center; gap: 2px; height: 21px; padding: 0 6px; font-size: 11px; line-height: 19px; color: #fff; border: 1px solid #0052bb; border-radius: 4px; background: linear-gradient(#0088cc, #0044cc); }

.gap td { height: 12px; padding: 0; border: 0; border-top: 3px solid #3465a4; box-shadow: inset 0 1px #ddd; }
tr.gap > td:first-child { border-left: 0; position: relative; }
.add-row { position: absolute; top: -12px; left: -3px; display: grid; place-items: center; width: 16px; height: 16px; padding: 0; color: #0f6096; background: #fff; border: 2px solid #0f6096; border-radius: 8px; }

.overlay { position: fixed; inset: 0; background: rgba(0, 0, 0, .75); }
.tooltip { position: absolute; left: 313px; top: 664px; padding: 7px 7px 9px 8px; font-size: 11px; line-height: 16px; color: #fff; background: #000; border-radius: 4px; opacity: .8; }
.tooltip::after { content: ""; position: absolute; top: 100%; left: 50%; margin-left: -5px; border: 5px solid transparent; border-top-color: #000; border-bottom: 0; }

.modal { position: fixed; top: 67px; right: 28px; width: 700px; max-width: 100%; background: #f3f3f3; box-shadow: 4px 4px 8px rgba(0, 0, 0, .5); }
.modal-head { display: flex; align-items: center; justify-content: space-between; height: 40px; padding-left: 10px; color: #fff; background: #000; }
.modal-head h1 { margin: 0; font-size: 21px; font-weight: normal; line-height: 40px; }
.close { padding: 0 0 2px; border: 0; background: none; line-height: 0; }
.close svg { width: 15px; height: 22px; }
.map { position: relative; padding-top: 1px; }
.map-canvas { display: block; width: 100%; height: 400px; }
.zoomer { position: absolute; top: 11px; left: 10px; display: flex; flex-direction: column; border: 2px solid rgba(0, 0, 0, .2); border-radius: 4px; background-clip: padding-box; }
.zoomer button { width: 30px; height: 30px; padding: 0; border: 0; color: #000; background: #fff; font: bold 22px/30px "Liberation Mono", monospace; }
.zoomer button:first-child { height: 31px; border-bottom: 1px solid #ccc; border-radius: 2px 2px 0 0; }
.zoomer button:last-child { border-radius: 0 0 2px 2px; }
.credit { position: absolute; right: 0; bottom: 0; padding: 0 5px; line-height: 17px; color: #333; background: rgba(255, 255, 255, .8); white-space: nowrap; }
.credit a { color: #0078a8; }
.flag { width: 12px; height: 8px; }
.modal-foot { padding: 5px 10px; color: #555; }

.map-canvas path, .map-canvas use { stroke-linejoin: round; stroke-linecap: round; }
.sea { fill: #aad3df; }
.flat { fill: #a7c0cc; }
#flats path { stroke: #4a96e0; stroke-width: 1; }
.land { fill: #f2efe9; }
.coast { fill: none; stroke: #9a7a9c; stroke-width: 2; stroke-opacity: .85; }
.field { fill: #eef0d5; }
.heath { fill: #d6d99f; }
.wood { fill: #add19e; }
.grass { fill: #cdebb0; }
.town { fill: #dddddd; }
.park { fill: #88dfbe; }
.islet { fill: #e5d5ce; stroke: #9a7a9c; stroke-width: 1; }
#lanes path { fill: none; stroke: #aaa8a6; stroke-width: 1; }
#streets path { fill: none; stroke: #c4c2c2; stroke-width: 1; }
.channel { fill: #8fb3c9; stroke: #9a7a9c; stroke-width: 1; }
.river { fill: none; stroke: #95b5c4; stroke-width: 2; }
.river.wide { stroke: #aad3df; stroke-width: 8; }
.stream { fill: none; stroke: #93a9bd; stroke-width: 2; stroke-dasharray: 3 2; }
.border-line { fill: none; stroke: #ac83ad; stroke-width: 1; stroke-dasharray: 5 2 1 2; opacity: .75; }
.rail { fill: none; stroke: #777; stroke-width: 2; }
.case path, .fill { fill: none; }
.case.white { stroke: #bbb; stroke-width: 3; }
.case.yellow { stroke: #ccd08a; stroke-width: 4; }
.case.orange { stroke: #e0a566; stroke-width: 5; }
.fill.white { stroke: #fff; stroke-width: 2; }
.fill.yellow { stroke: #f4f7b4; stroke-width: 3; }
.fill.orange { stroke: #fcd6a4; stroke-width: 3; }
.track { fill: none; stroke: #3388ff; stroke-width: 3; }
.trunk { fill: none; stroke: #f9a08e; stroke-width: 3; }
.labels { font: 10px "Noto Sans", sans-serif; fill: #222; stroke: rgba(255, 255, 255, .75); stroke-width: 2px; paint-order: stroke; text-anchor: middle; }
.labels .city { font-size: 13px; }
.labels .bay { font-style: italic; fill: #9a7420; }
.labels .dept { fill: #8d618b; }
.shield { font: 11px "Noto Sans", sans-serif; text-anchor: middle; fill: #4a4a20; }
.shield rect { fill: #f1f1d4; stroke: #c4c79a; }
.shield .primary { fill: #f8e4d0; stroke: #cfa583; }
.shield .brown { fill: #664228; }
.peak { fill: #d08f55; }
.station { fill: #7981b0; }
```
